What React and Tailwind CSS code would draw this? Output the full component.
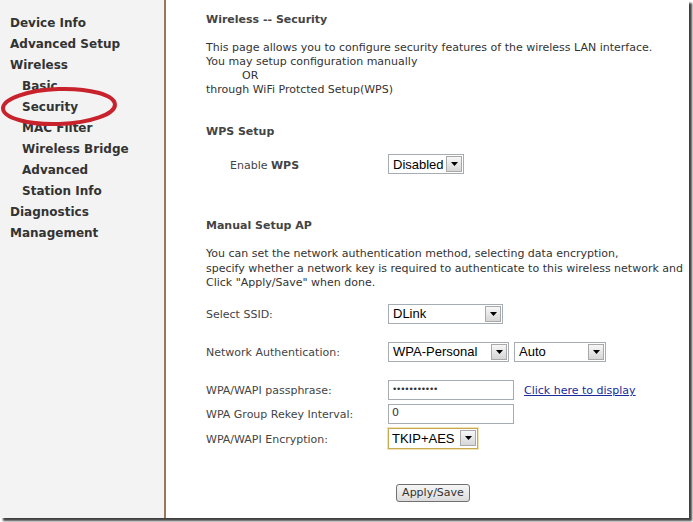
import React from "react";

const menu = [
  { label: "Device Info", sub: false },
  { label: "Advanced Setup", sub: false },
  { label: "Wireless", sub: false },
  { label: "Basic", sub: true },
  { label: "Security", sub: true },
  { label: "MAC Filter", sub: true },
  { label: "Wireless Bridge", sub: true },
  { label: "Advanced", sub: true },
  { label: "Station Info", sub: true },
  { label: "Diagnostics", sub: false },
  { label: "Management", sub: false },
];

function Arrow() {
  return (
    <span className="flex h-[16px] w-[16px] items-center justify-center border border-[#a9a9a9] bg-gradient-to-b from-[#f7f7f7] to-[#d6d6d6]">
      <svg width="7" height="4" viewBox="0 0 7 4">
        <path d="M0 0 L7 0 L3.5 4 Z" fill="#000" />
      </svg>
    </span>
  );
}

function FakeSelect({ value, width, focused }) {
  return (
    <div
      className={
        focused
          ? "flex h-[21px] items-center justify-between border border-[#c9a94f] bg-white pl-[3px] pr-[1px] shadow-[0_0_0_1px_#efe3b5]"
          : "flex h-[20px] items-center justify-between border border-[#a5acb2] bg-white pl-[4px] pr-[1px]"
      }
      style={{ width }}
    >
      <span className="font-['Liberation_Sans',sans-serif] text-[13px] leading-none text-black">
        {value}
      </span>
      <Arrow />
    </div>
  );
}

function TextBox({ children }) {
  return (
    <div className="flex h-[20px] w-[126px] items-center border border-[#a5acb2] bg-white px-[3px] text-[11px] text-[#333]">
      {children}
    </div>
  );
}

function FieldRow({ label, children, className = "" }) {
  return (
    <div className={"flex items-center " + className}>
      <div className="w-[182px] translate-y-[2px] text-[11px] text-[#444]">{label}</div>
      {children}
    </div>
  );
}

export default function App() {
  return (
    <div className="h-[522px] w-[693px] overflow-hidden bg-white font-['DejaVu_Sans',sans-serif]">
      <div className="flex h-[518px] w-[689px] bg-white shadow-[3px_3px_2px_rgba(0,0,0,0.75)]">
        <aside className="relative w-[166px] shrink-0 border-r-2 border-[#9a7758] bg-[#f3f3f3] pt-[13px]">
          {menu.map((item) => (
            <div
              key={item.label}
              className={
                "text-[12px] font-bold leading-[21px] text-[#333] " +
                (item.sub ? "pl-[22px]" : "pl-[10px]")
              }
            >
              {item.label}
            </div>
          ))}
          <svg
            className="absolute left-0 top-[85px]"
            width="122"
            height="44"
            viewBox="0 0 122 44"
          >
            <ellipse
              cx="59"
              cy="21.5"
              rx="56"
              ry="17.5"
              transform="rotate(-2 59 21.5)"
              fill="none"
              stroke="#c8232c"
              strokeWidth="4"
            />
          </svg>
        </aside>

        <main className="flex-1 overflow-hidden pl-[40px] text-[11px] text-[#333]">
          <h1 className="mt-[13px] text-[11px] font-bold leading-[14px] text-[#444]">
            Wireless -- Security
          </h1>
          <div className="mt-[14px] leading-[14px]">
            <div>This page allows you to configure security features of the wireless LAN interface.</div>
            <div>You may setup configuration manually</div>
            <div className="pl-[36px]">OR</div>
            <div>through WiFi Protcted Setup(WPS)</div>
          </div>

          <h2 className="mt-[28px] text-[11px] font-bold leading-[14px] text-[#444]">WPS Setup</h2>
          <div className="mt-[15px] flex items-center">
            <div className="w-[182px] translate-y-[2px] pl-[24px] text-[11px] text-[#444]">
              Enable <span className="font-bold">WPS</span>
            </div>
            <FakeSelect value="Disabled" width={76} />
          </div>

          <h2 className="mt-[45px] text-[11px] font-bold leading-[14px] text-[#444]">
            Manual Setup AP
          </h2>
          <div className="mt-[14px] whitespace-nowrap leading-[14.5px]">
            <div>You can set the network authentication method, selecting data encryption,</div>
            <div>specify whether a network key is required to authenticate to this wireless network and</div>
            <div>Click "Apply/Save" when done.</div>
          </div>

          <FieldRow label="Select SSID:" className="mt-[13px]">
            <FakeSelect value="DLink" width={115} />
          </FieldRow>

          <FieldRow label="Network Authentication:" className="mt-[18px]">
            <div className="flex gap-[5px]">
              <FakeSelect value="WPA-Personal" width={121} />
              <FakeSelect value="Auto" width={92} />
            </div>
          </FieldRow>

          <FieldRow label="WPA/WAPI passphrase:" className="mt-[18px]">
            <TextBox>
              <span className="text-[9px] tracking-[-1.2px] text-[#333]">•••••••••••</span>
            </TextBox>
            <a href="#" className="ml-[10px] translate-y-[2px] text-[11px] text-[#1a2a9a] underline">
              Click here to display
            </a>
          </FieldRow>

          <FieldRow label="WPA Group Rekey Interval:" className="mt-[4px]">
            <TextBox>0</TextBox>
          </FieldRow>

          <FieldRow label="WPA/WAPI Encryption:" className="mt-[4px]">
            <FakeSelect value="TKIP+AES" width={90} focused />
          </FieldRow>

          <div className="mt-[35px] pl-[190px]">
            <button
              type="button"
              className="h-[18px] w-[74px] rounded-[3px] border border-[#707070] bg-gradient-to-b from-[#f6f6f6] to-[#dcdcdc] text-[11px] leading-none text-[#333]"
            >
              Apply/Save
            </button>
          </div>
        </main>
      </div>
    </div>
  );
}
